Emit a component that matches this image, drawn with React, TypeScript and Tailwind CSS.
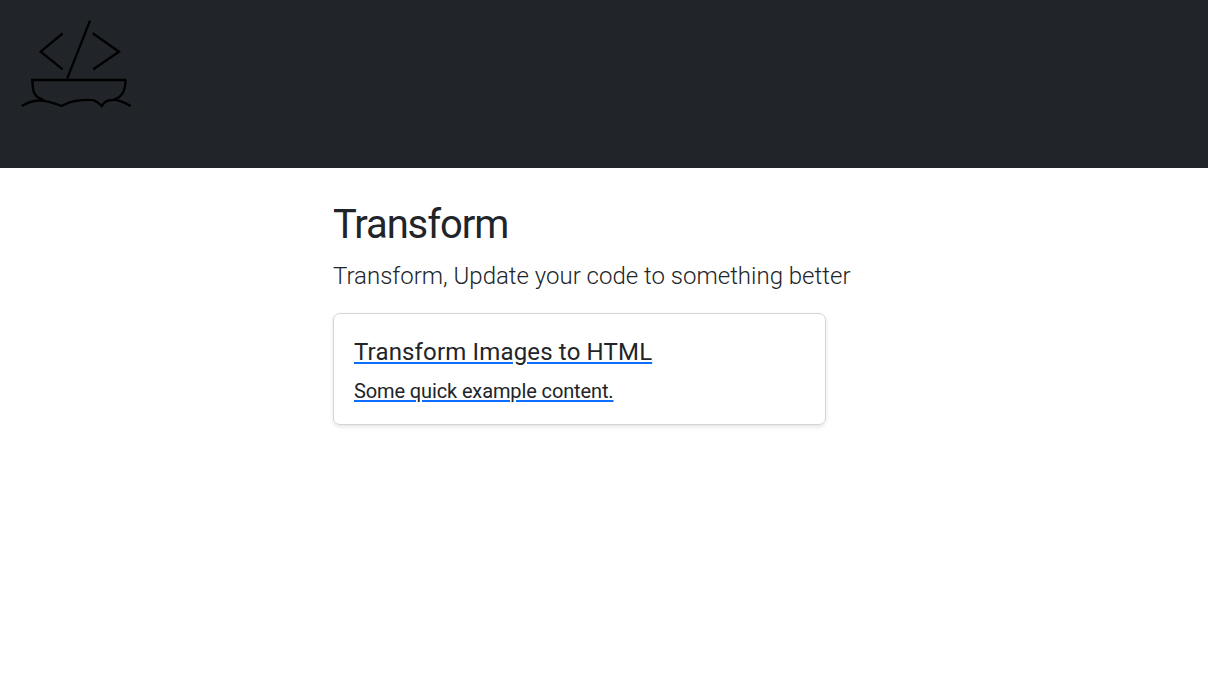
export default function App() {
  return (
    <div className="min-h-[691px] bg-white text-[#212529] font-['Roboto','Noto_Sans',sans-serif]">
      <header className="h-[168px] bg-[#212529] pl-[21px] pt-[18px]">
        <svg width="112" height="92" viewBox="21 18 112 92" fill="none" stroke="#000" strokeWidth="2.300">
          <path d="M62.7 33.300 40.700 51.700 62.700 69.300" />
          <path d="M92.700 33.300 119 51.700 93.300 69.300" />
          <path d="M90 20.700 67.300 78.300" />
          <path d="M31 80H126.500" />
          <path d="M32.500 80C32.500 90 33 97 43 99.500" />
          <path d="M125.500 80C125.500 90 123 97 114 99.500" />
          <path d="M21.700 106C27 103 32 100.800 38 100.500C45 100.300 54 103 61.700 106C66 103.800 70 101.800 75 101C82 100 90 99.500 94 100.300C97 101.300 100 104 101.700 106C103 104 105 101.500 108 100.700C112 99.700 116 99.500 119 100.700C123 102 127 104 130.700 106" />
        </svg>
      </header>
      <main className="pl-[333px] pt-[33px]">
        <h1 className="text-[40px] leading-[48px] font-normal tracking-[-1.1px]">Transform</h1>
        <p className="mt-[9px] text-[24px] leading-[36px] font-light">Transform, Update your code to something better</p>
        <a href="#" className="mt-[19px] block w-[493px] h-[112px] rounded-[7px] border border-[#d3d4d5] shadow-[0_2px_4px_rgba(0,0,0,0.1)] px-[20px] pt-[20px] text-[#212529] underline decoration-[#0d6efd] decoration-[1.5px] underline-offset-[2px]">
          <h5 className="text-[24px] leading-[36px] font-normal tracking-[0.16px]">Transform Images to HTML</h5>
          <p className="mt-[6px] text-[20px] leading-[30px] tracking-[-0.12px]">Some quick example content.</p>
        </a>
      </main>
    </div>
  );
}
